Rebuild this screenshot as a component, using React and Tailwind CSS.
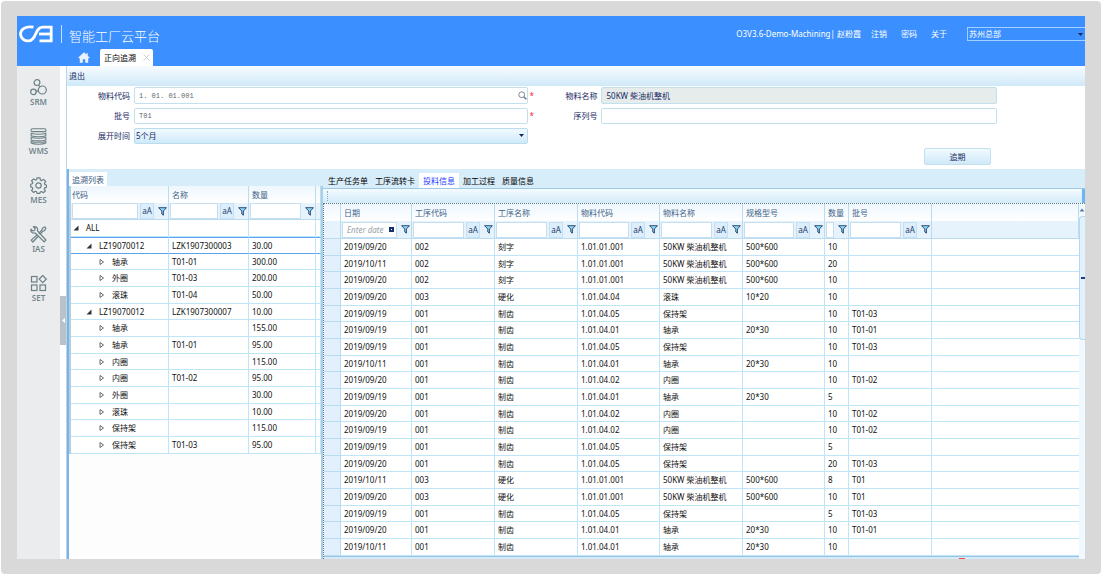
import React from "react";

const MODULES = [
  { name: "SRM", icon: "srm" },
  { name: "WMS", icon: "wms" },
  { name: "MES", icon: "mes" },
  { name: "IAS", icon: "ias" },
  { name: "SET", icon: "set" },
];

const TREE = [
  [0, true, "ALL", "", ""],
  [1, true, "LZ19070012", "LZK1907300003", "30.00"],
  [2, false, "轴承", "T01-01", "300.00"],
  [2, false, "外圈", "T01-03", "200.00"],
  [2, false, "滚珠", "T01-04", "50.00"],
  [1, true, "LZ19070012", "LZK1907300007", "10.00"],
  [2, false, "轴承", "", "155.00"],
  [2, false, "轴承", "T01-01", "95.00"],
  [2, false, "内圈", "", "115.00"],
  [2, false, "内圈", "T01-02", "95.00"],
  [2, false, "外圈", "", "30.00"],
  [2, false, "滚珠", "", "10.00"],
  [2, false, "保持架", "", "115.00"],
  [2, false, "保持架", "T01-03", "95.00"],
];

const INDENT = ["pl-[2px]", "pl-[15px]", "pl-[28px]"];

const COLUMNS = [
  { title: "日期", kind: "date" },
  { title: "工序代码", kind: "text" },
  { title: "工序名称", kind: "text" },
  { title: "物料代码", kind: "text" },
  { title: "物料名称", kind: "text" },
  { title: "规格型号", kind: "text" },
  { title: "数量", kind: "number" },
  { title: "批号", kind: "text" },
];

const ENGINE = "50KW 柴油机整机";
const ROWS = [
  ["2019/09/20", "002", "刻字", "1.01.01.001", ENGINE, "500*600", "10", ""],
  ["2019/10/11", "002", "刻字", "1.01.01.001", ENGINE, "500*600", "20", ""],
  ["2019/09/20", "002", "刻字", "1.01.01.001", ENGINE, "500*600", "10", ""],
  ["2019/09/20", "003", "硬化", "1.01.04.04", "滚珠", "10*20", "10", ""],
  ["2019/09/19", "001", "制齿", "1.01.04.05", "保持架", "", "10", "T01-03"],
  ["2019/09/19", "001", "制齿", "1.01.04.01", "轴承", "20*30", "10", "T01-01"],
  ["2019/09/19", "001", "制齿", "1.01.04.05", "保持架", "", "10", "T01-03"],
  ["2019/10/11", "001", "制齿", "1.01.04.01", "轴承", "20*30", "10", ""],
  ["2019/09/20", "001", "制齿", "1.01.04.02", "内圈", "", "10", "T01-02"],
  ["2019/09/19", "001", "制齿", "1.01.04.01", "轴承", "20*30", "5", ""],
  ["2019/09/20", "001", "制齿", "1.01.04.02", "内圈", "", "10", "T01-02"],
  ["2019/09/19", "001", "制齿", "1.01.04.02", "内圈", "", "10", "T01-02"],
  ["2019/09/19", "001", "制齿", "1.01.04.05", "保持架", "", "5", ""],
  ["2019/09/20", "001", "制齿", "1.01.04.05", "保持架", "", "20", "T01-03"],
  ["2019/10/11", "003", "硬化", "1.01.01.001", ENGINE, "500*600", "8", "T01"],
  ["2019/09/20", "003", "硬化", "1.01.01.001", ENGINE, "500*600", "10", "T01"],
  ["2019/09/19", "001", "制齿", "1.01.04.05", "保持架", "", "5", "T01-03"],
  ["2019/09/20", "001", "制齿", "1.01.04.01", "轴承", "20*30", "10", "T01-01"],
  ["2019/10/11", "001", "制齿", "1.01.04.01", "轴承", "20*30", "10", ""],
];

function Logo() {
  return (
    <svg className="h-[18px] w-[34px]" viewBox="0 0 34 18" fill="none" stroke="#fff" strokeWidth="2.8" aria-hidden="true">
      <path d="M14.5 2.2C6.5.6 1.4 4.6 1.5 9c.1 4.4 4.4 7.4 8.6 6.9 7.400-.9 6-13.700 13.400-13.700h8.700v13.700H20.500" />
      <path d="M20 9h12" />
    </svg>
  );
}

function ModuleIcon({ name }) {
  const common = {
    className: "h-[17px] w-[17px] shrink-0",
    viewBox: "0 0 17 17",
    fill: "none",
    stroke: "#6b8086",
    strokeWidth: "1.2",
    "aria-hidden": true,
  };
  if (name === "srm")
    return (
      <svg {...common}>
        <circle cx="7" cy="3.6" r="2.9" />
        <circle cx="3.4" cy="12.9" r="2.7" />
        <circle cx="12.3" cy="11" r="4" />
        <path d="M8.4 6.200l1.700 1.400M6 12.300l2.400-.5" />
      </svg>
    );
  if (name === "wms")
    return (
      <svg {...common} strokeWidth="1.1">
        <rect x="1" y=".8" width="15" height="2.8" rx="1.4" />
        <path d="M1.2 5.200c2.800 1.300 11.800 1.300 14.600 0v2.600c-2.800 1.300-11.800 1.300-14.600 0z" />
        <path d="M1.200 9.300c2.800 1.300 11.800 1.300 14.600 0v2.600c-2.800 1.300-11.800 1.300-14.600 0z" />
        <path d="M1.200 13.400c2.800 1.200 11.800 1.200 14.600 0v1.700c-2.800 1.500-11.800 1.500-14.600 0z" />
      </svg>
    );
  if (name === "mes")
    return (
      <svg {...common}>
        <circle cx="8.5" cy="8.5" r="2.7" />
        <path strokeLinejoin="round" d="M7 .9h3l.4 2.200 1.300.5 1.900-1.200 2.100 2.100-1.300 1.900.5 1.300 1.500.3v2.300l-1.700.5-.5 1.200 1.200 1.800-2 1.900-1.900-1.200-1.200.5-.4 1.300H7l-.4-1.500-1.200-.5-1.800 1.200-2-2 1.200-1.800-.6-1.300L.7 9.900V7.300l1.600-.5.5-1.200-1.200-1.800 2-1.900 1.900 1.200 1.100-.4z" />
      </svg>
    );
  if (name === "ias")
    return (
      <svg {...common}>
        <path strokeLinejoin="round" d="M1 3.200L2.700 5l2-.5.4-2L3.300.8c3-.7 4.900 1.200 4.200 4L15.900 14l-1.700 1.900L5.200 7C2.500 7.700.3 5.800 1 3.200z" />
        <path strokeLinejoin="round" d="M15.900 2.200L14.600.9l-2.200 1.400-.4 1.600-3 3 1.100 1.100 3-3 1.400-.4zM6.800 9.200l-5.600 4.900 1.700 1.900L8 10.500" />
      </svg>
    );
  return (
    <svg {...common}>
      <rect x="1.5" y="1.5" width="5.5" height="5.5" />
      <rect x="1.5" y="10" width="5.5" height="5.5" />
      <rect x="10" y="10" width="5.5" height="5.5" />
      <path d="M12.7.5l3.500 3.600-3.500 3.600-3.500-3.600z" />
    </svg>
  );
}

function Funnel() {
  return (
    <button type="button" aria-label="筛选" className="shrink-0">
      <svg className="h-[9px] w-[9px]" viewBox="0 0 9 9" fill="#8fd6f5" stroke="#1d3f6e" strokeWidth=".9" aria-hidden="true">
        <path d="M.6.7h7.800L5.400 4v4.200L3.800 7V4z" />
      </svg>
    </button>
  );
}

function FilterCell({ label, kind }) {
  return (
    <div className="flex h-full items-center gap-0.5 pl-px">
      <div className="flex h-4 min-w-0 flex-1 items-center border border-[#c5dff0] bg-white">
        <input
          aria-label={label + "筛选"}
          placeholder={kind === "date" ? "Enter date" : undefined}
          className="h-full w-full min-w-0 bg-transparent px-1 italic outline-none placeholder:text-[#97a3ab]"
        />
        {kind === "date" && (
          <button type="button" aria-label="选择日期" className="mr-0.5 flex h-[5px] w-[5px] shrink-0 items-center justify-center bg-[#16306b]">
            <span className="h-px w-px bg-white" />
          </button>
        )}
      </div>
      {kind === "text" && (
        <button type="button" className="h-4 w-[14px] shrink-0 border border-[#c5e0f3] bg-[#dceefb] leading-[14px] text-[#23406b]">
          aA
        </button>
      )}
      <span className="flex w-3 shrink-0 justify-end pr-px">
        <Funnel />
      </span>
    </div>
  );
}

const TH = "border-r border-[#b9dcf0] bg-linear-to-b from-[#eef7fe] to-white p-0 pl-[3px] text-left font-normal text-[#3f6287]";
const TF = "border-r border-b border-[#b9dcf0] bg-[#e6f2fc] p-0 font-normal";
const TD_BASE = "truncate border-r border-b p-0";
const TD = TD_BASE + " border-[#bfe5f8]";
const TD_SELECTED = TD_BASE + " border-t border-t-[#5ba4ee] border-b-[#5ba4ee] border-r-[#bfe5f8]";

function TracePanel() {
  return (
    <section className="flex w-[256px] shrink-0 flex-col border-l-2 border-[#7fb0e6] bg-[#fdfdfd]">
      <div className="flex h-[17px] items-end bg-[#d8edfa]">
        <h2 className="h-[14px] bg-white px-[3px] leading-[15px] text-[#3a5a80]">追溯列表</h2>
      </div>
      <div className="flex border-r-2 border-[#a9cfe6]">
        <div className="w-0.5 shrink-0 bg-[#b3d0de]" />
        <table className="w-full table-fixed border-separate border-spacing-0 bg-white">
          <colgroup>
            <col className="w-[98px]" />
            <col className="w-[80px]" />
            <col className="w-[67px]" />
            <col />
          </colgroup>
          <thead>
            <tr className="h-[17px]">
              <th className={TH.replace("pl-[3px]", "pl-px")}>代码</th>
              <th className={TH}>名称</th>
              <th className={TH}>数量</th>
              <th className={TH} aria-label="空列" />
            </tr>
            <tr className="h-[17px]">
              <th className={TF}><FilterCell label="代码" kind="text" /></th>
              <th className={TF}><FilterCell label="名称" kind="text" /></th>
              <th className={TF}><FilterCell label="数量" kind="number" /></th>
              <th className={TF} aria-label="空列" />
            </tr>
          </thead>
          <tbody>
            {TREE.map(([level, open, code, name, qty], i) => {
              const cell = i === 1 ? TD_SELECTED : TD;
              return (
                <tr key={i} className="h-[17px] [&:nth-child(3n)]:h-4">
                  <td className={cell + " " + INDENT[level]}>
                    <div className="flex items-center">
                      <button type="button" aria-label={open ? "折叠" : "展开"} className="w-[13px] shrink-0">
                        <svg className="h-[6px] w-[6px]" viewBox="0 0 6 6" aria-hidden="true">
                          {open ? (
                            <path d="M5.500.5v5H.5z" fill="#333" />
                          ) : (
                            <path d="M1 .5L4.500 3 1 5.500z" fill="#fff" stroke="#444" strokeWidth=".8" />
                          )}
                        </svg>
                      </button>
                      {code}
                    </div>
                  </td>
                  <td className={cell + " pl-[3px]"}>{name}</td>
                  <td className={cell + " pl-[3px]"}>{qty}</td>
                  <td className={cell} />
                </tr>
              );
            })}
          </tbody>
        </table>
      </div>
      <div className="flex-1 border-r-2 border-[#a9cfe6]" />
    </section>
  );
}

function DetailPanel() {
  const tabs = ["生产任务单", "工序流转卡", "投料信息", "加工过程", "质量信息"];
  return (
    <section className="flex min-w-0 flex-1 flex-col">
      <div className="flex h-[19px] items-end gap-px bg-[#d8edfa] pl-0.5" role="tablist">
        {tabs.map((t, i) => (
          <button
            key={t}
            type="button"
            role="tab"
            aria-selected={i === 2}
            className={i === 2 ? "h-[15px] bg-white px-1 leading-[15px] text-[#1b3bff]" : "h-[15px] px-[3px] leading-[15px] text-black"}
          >
            {t}
          </button>
        ))}
      </div>
      <div className="flex h-[15px] items-center border-t border-[#9cc9e4] bg-linear-to-b from-[#f4fbff] to-[#d3ebfa] pl-1">
        <span className="h-2.5 border-l border-dotted border-[#8aa8bf]" />
        <span className="ml-auto h-full w-[3px] bg-[#6cb5f5]" />
      </div>
      <div className="flex min-h-0 flex-1 border-t border-l border-dotted border-[#5d7a8f]">
        <div className="flex min-w-0 flex-1 flex-col">
          <table className="w-full table-fixed border-separate border-spacing-0 bg-white">
            <colgroup>
              <col className="w-[17px]" />
              <col className="w-[71px]" />
              <col className="w-[83px]" />
              <col className="w-[83px]" />
              <col className="w-[82px]" />
              <col className="w-[83px]" />
              <col className="w-[82px]" />
              <col className="w-[24px]" />
              <col className="w-[83px]" />
              <col />
            </colgroup>
            <thead>
              <tr className="h-[17px]">
                <th className={TH} aria-label="行标" />
                {COLUMNS.map((c) => (
                  <th key={c.title} className={TH + " whitespace-nowrap"}>{c.title}</th>
                ))}
                <th className={TH} aria-label="空列" />
              </tr>
              <tr className="h-[18px]">
                <th className={TF} aria-label="行标" />
                {COLUMNS.map((c) => (
                  <th key={c.title} className={TF}><FilterCell label={c.title} kind={c.kind} /></th>
                ))}
                <th className={TF} aria-label="空列" />
              </tr>
            </thead>
            <tbody>
              {ROWS.map((row, i) => (
                <tr key={i} className="h-[17px] [&:nth-child(3n+2)]:h-4">
                  <td className="border-r border-b border-[#b9dcf0] bg-[#e1f0fc] p-0" />
                  {row.map((v, j) => (
                    <td key={j} className={TD + " pl-[3px]"}>{v}</td>
                  ))}
                  <td className="border-b border-[#bfe5f8] p-0" />
                </tr>
              ))}
            </tbody>
          </table>
          <div className="flex flex-1 items-end justify-end border-t border-[#9cc4de] bg-[#d5eafa] pr-[114px]">
            <span className="h-px w-1.5 bg-[#f04a4a]" />
          </div>
        </div>
        <div className="flex w-[6px] shrink-0 flex-col items-center bg-[#f1f8fe]">
          <svg className="mt-1 h-1 w-1.5" viewBox="0 0 6 4" aria-hidden="true">
            <path d="M3 .5L5.500 3.500H.5z" fill="#5b7fa8" />
          </svg>
          <div className="mt-1 flex h-[124px] w-full items-center justify-end rounded-l-sm border border-r-0 border-[#b5d8ee] bg-[#e2f2fd]">
            <span className="h-0.5 w-1 bg-[#1f3c86]" />
          </div>
        </div>
      </div>
    </section>
  );
}

const LABEL = "w-[67px] shrink-0 pr-1 text-right text-[#17285f]";
const FIELD = "h-4 w-full min-w-0 rounded-xs border border-[#c3e0ee] px-1 font-['Liberation_Mono','Noto_Sans_CJK_SC',monospace] text-[7px] text-[#5c6670] outline-none";

function QueryForm() {
  return (
    <form className="flex h-[83px] flex-col bg-white pt-px pr-[88px]" onSubmit={(e) => e.preventDefault()}>
      <div className="grid grid-cols-[461fr_468fr] gap-y-[3px]">
        <div className="flex h-[17px] items-center">
          <label htmlFor="material-code" className={LABEL}>物料代码</label>
          <div className="flex h-full min-w-0 flex-1 items-center rounded-xs border border-[#c3e0ee]">
            <input id="material-code" defaultValue="1. 01. 01.001" className="w-full min-w-0 bg-transparent px-1 font-['Liberation_Mono',monospace] text-[7px] text-[#5c6670] outline-none" />
            <button type="button" aria-label="查找">
              <svg className="h-[9px] w-[9px]" viewBox="0 0 9 9" fill="none" stroke="#7d898f" aria-hidden="true">
                <circle cx="3.7" cy="3.7" r="2.9" />
                <path d="M5.900 5.900l2.500 2.500" strokeWidth="1.500" />
              </svg>
            </button>
          </div>
        </div>
        <div className="flex h-[17px] items-center">
          <span className="w-[6px] shrink-0 pl-px text-[#e5294a]">*</span>
          <label htmlFor="material-name" className={LABEL}>物料名称</label>
          <div className="h-full min-w-0 flex-1 rounded-xs border border-[#c3e0ee] bg-[#e6ecec]">
            <input id="material-name" readOnly defaultValue={ENGINE} className="h-full w-full min-w-0 bg-transparent px-1 text-[#17285f] outline-none" />
          </div>
        </div>
        <div className="flex h-[17px] items-center">
          <label htmlFor="batch" className={LABEL}>批号</label>
          <input id="batch" defaultValue="T01" className={FIELD} />
        </div>
        <div className="flex h-[17px] items-center">
          <span className="w-[6px] shrink-0 pl-px text-[#e5294a]">*</span>
          <label htmlFor="serial" className={LABEL}>序列号</label>
          <input id="serial" className={FIELD} />
        </div>
        <div className="flex h-[17px] items-center">
          <label htmlFor="period" className={LABEL}>展开时间</label>
          <div className="grid h-4 min-w-0 flex-1 items-center rounded-xs border border-[#b9dcee] bg-linear-to-b from-[#f1faff] to-[#cfe9f9]">
            <select id="period" className="col-start-1 row-start-1 w-full appearance-none bg-transparent px-px text-[#17285f] outline-none">
              <option>5个月</option>
            </select>
            <svg className="pointer-events-none col-start-1 row-start-1 mr-[3px] h-[3px] w-[5px] justify-self-end" viewBox="0 0 5 3" aria-hidden="true">
              <path d="M0 0h5L2.500 3z" fill="#17285f" />
            </svg>
          </div>
        </div>
      </div>
      <div className="flex justify-end pt-1 pr-[6px]">
        <button type="submit" className="h-[17px] w-[67px] rounded-xs border border-[#c3e0ee] bg-linear-to-b from-[#f1faff] to-[#cfe9f9] text-[#17285f]">
          追期
        </button>
      </div>
    </form>
  );
}

function Header() {
  return (
    <header className="flex h-[50px] shrink-0 flex-col justify-between bg-[#3b8fff] text-white">
      <div className="flex items-center pt-2 pl-0.5">
        <Logo />
        <span className="ml-2 h-[18px] w-px bg-white/70" />
        <h1 className="ml-[7px] pt-1 text-[13px] leading-4 font-light">智能工厂云平台</h1>
        <nav className="ml-auto flex items-center gap-[14px] whitespace-nowrap">
          <span className="-mr-1">O3V3.6-Demo-Machining| 赵粉霞</span>
          <a href="#logout">注销</a>
          <a href="#password">密码</a>
          <a href="#about">关于</a>
        </nav>
        <div className="ml-5 grid h-[14px] w-[118px] items-center border border-r-0 border-[#9fd0ff]">
          <select aria-label="组织" className="col-start-1 row-start-1 w-full appearance-none bg-transparent px-px leading-3 outline-none">
            <option>苏州总部</option>
          </select>
          <svg className="pointer-events-none col-start-1 row-start-1 mr-0.5 h-[3px] w-[5px] justify-self-end" viewBox="0 0 5 3" aria-hidden="true">
            <path d="M0 0h5L2.500 3z" fill="#10295c" />
          </svg>
        </div>
      </div>
      <div className="flex h-[17px] items-center pl-[61px]">
        <a href="#home" aria-label="首页">
          <svg className="h-[11px] w-3" viewBox="0 0 12 11" fill="#e9f2fb" aria-hidden="true">
            <path d="M6 .3L.3 5.600l.9.9.6-.5v4.700h3V7.200h2.400v3.500h3V6l.6.5.9-.9-1.900-1.700V1.200H8.300v1.200z" />
          </svg>
        </a>
        <div className="ml-[10px] flex h-full items-center rounded-t-xs bg-white pr-[3px] pl-1 text-black">
          <a href="#trace">正向追溯</a>
          <button type="button" aria-label="关闭" className="ml-[7px]">
            <svg className="h-[7px] w-[7px]" viewBox="0 0 7 7" stroke="#c9d0d4" aria-hidden="true">
              <path d="M.5.5l6 6M6.500.5l-6 6" />
            </svg>
          </button>
        </div>
      </div>
    </header>
  );
}

export default function App() {
  return (
    <div className="flex min-h-screen bg-white p-px font-['Noto_Sans','Noto_Sans_CJK_SC',sans-serif] text-[8px] leading-3 text-[#111]">
      <div className="flex min-w-0 flex-1 rounded bg-[#d9d9d9] px-4 py-[15px]">
        <div className="flex min-w-0 flex-1 flex-col bg-white">
          <Header />
          <div className="flex min-h-0 flex-1">
            <nav className="flex w-[43px] shrink-0 flex-col items-center gap-[17px] bg-[#ebecee] pt-[13px]">
              {MODULES.map((m) => (
                <a key={m.name} href={"#" + m.name} className="flex h-8 flex-col items-center text-[#74868c]">
                  <ModuleIcon name={m.icon} />
                  <span className="font-semibold">{m.name}</span>
                </a>
              ))}
            </nav>
            <div className="flex w-[6px] shrink-0 flex-col bg-white pt-[230px]">
              <button type="button" aria-label="收起菜单" className="flex h-[49px] w-full items-center justify-center bg-[#b7c3c8]">
                <svg className="h-[5px] w-[3px]" viewBox="0 0 3 5" aria-hidden="true">
                  <path d="M3 0v5L0 2.500z" fill="#fff" />
                </svg>
              </button>
            </div>
            <main className="flex min-w-0 flex-1 flex-col border-l border-[#b5d8e8]">
              <div className="flex h-5 items-center bg-linear-to-b from-[#f6fcff] to-[#d0e9f8] pl-0.5">
                <button type="button" className="text-[#17285f]">退出</button>
              </div>
              <QueryForm />
              <div className="flex flex-1">
                <TracePanel />
                <DetailPanel />
              </div>
            </main>
          </div>
        </div>
      </div>
    </div>
  );
}
